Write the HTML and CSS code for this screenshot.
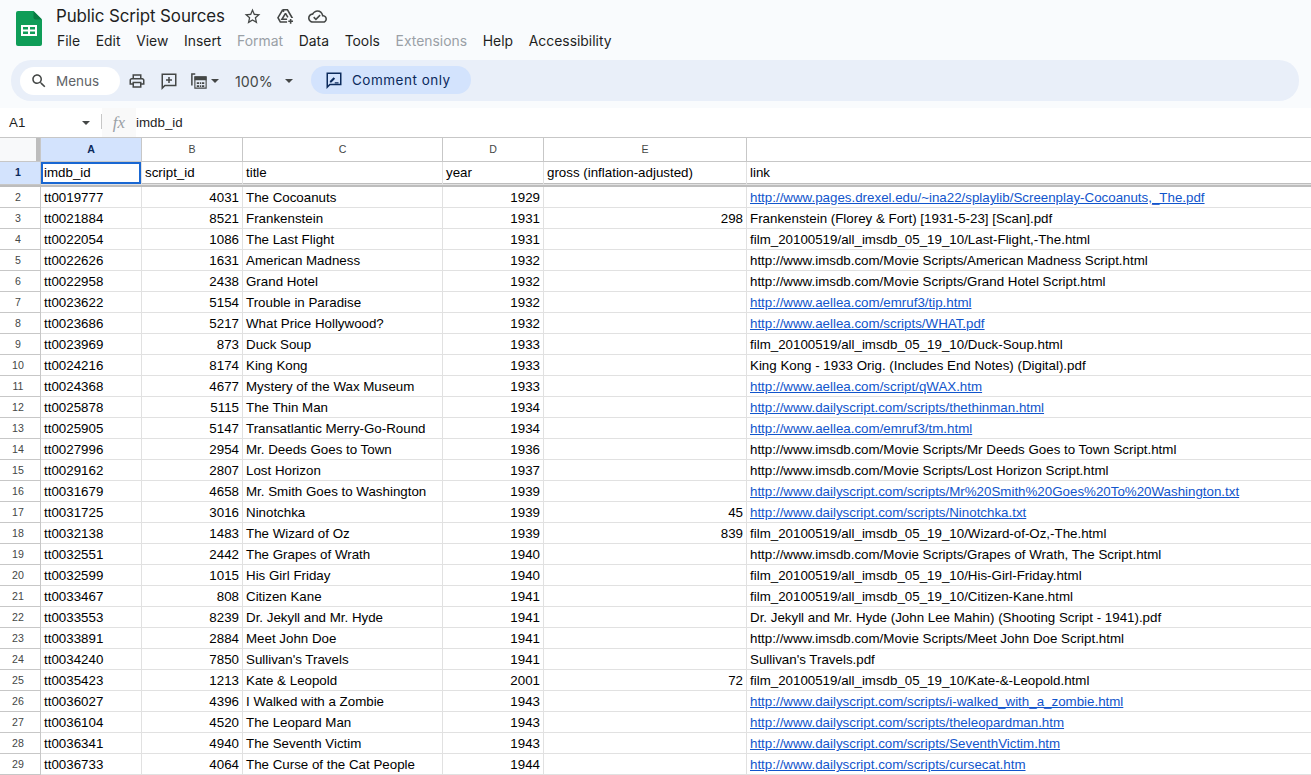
FILE: index.html
```html
<!DOCTYPE html>
<html lang="en">
<head>
<meta charset="utf-8">
<title>Public Script Sources</title>
<link rel="stylesheet" href="styles.css">
</head>
<body>
<header class="top">
  <svg class="logo" viewBox="0 0 26 35" aria-hidden="true">
    <path fill="#0f9d58" d="M2 0h15.500L26 8.500V33a2 2 0 0 1-2 2H2a2 2 0 0 1-2-2V2a2 2 0 0 1 2-2z"/>
    <path fill="#0a7a42" d="M17.500 0L26 8.500h-6.500a2 2 0 0 1-2-2z"/>
    <path fill="#fff" d="M5 14h16v11H5z"/>
    <path fill="#0f9d58" d="M7 16h5v2.500H7zM14 16h5v2.500h-5zM7 20.500h5V23H7zM14 20.500h5V23h-5z"/>
  </svg>
  <div class="titles">
    <div class="title-row">
      <span class="doc-title">Public Script Sources</span>
      <svg class="ic star" viewBox="0 0 24 24"><path d="M22 9.240l-7.190-.62L12 2 9.190 8.630 2 9.240l5.460 4.730L5.820 21 12 17.270 18.180 21l-1.630-7.030L22 9.240zM12 15.400l-3.760 2.270 1-4.280-3.320-2.880 4.380-.38L12 6.100l1.710 4.040 4.380.38-3.320 2.880 1 4.280L12 15.400z"/></svg>
      <svg class="ic drive" viewBox="0 0 24 24"><path class="line" d="M8.500 3.500h6L20 13h-1M8.500 3.500L2.500 13.500l3 5.500h8.500M8.500 3.500l1.500 2.500M12 8l-4.500 7.500h6.500M12 8l3 5"/><path class="line" d="M18.500 15v6M15.500 18h6"/></svg>
      <svg class="ic cloud" viewBox="0 0 24 24"><path d="M19.350 10.040C18.670 6.590 15.640 4 12 4 9.110 4 6.600 5.640 5.350 8.040 2.340 8.360 0 10.910 0 14c0 3.310 2.690 6 6 6h13c2.760 0 5-2.240 5-5 0-2.640-2.050-4.780-4.650-4.960zM19 18H6c-2.210 0-4-1.790-4-4 0-2.050 1.530-3.760 3.560-3.970l1.070-.11.5-.95C8.080 7.140 9.940 6 12 6c2.620 0 4.880 1.860 5.390 4.430l.3 1.500 1.530.11c1.560.1 2.780 1.410 2.780 2.960 0 1.650-1.350 3-3 3zm-9-3.820l-2.090-2.090L6.500 13.500 10 17l6.010-6.010-1.410-1.410z"/></svg>
    </div>
    <nav class="menu">
      <span>File</span><span>Edit</span><span>View</span><span>Insert</span><span class="off">Format</span><span>Data</span><span>Tools</span><span class="off">Extensions</span><span>Help</span><span>Accessibility</span>
    </nav>
  </div>
</header>

<div class="toolbar">
  <div class="search">
    <svg class="ic-search" viewBox="0 0 24 24"><path d="M15.500 14h-.79l-.28-.27C15.410 12.590 16 11.110 16 9.500 16 5.910 13.090 3 9.500 3S3 5.910 3 9.500 5.910 16 9.500 16c1.610 0 3.090-.59 4.230-1.570l.27.28v.79l5 4.990L20.490 19l-4.990-5zm-6 0C7.010 14 5 11.990 5 9.500S7.010 5 9.500 5 14 7.010 14 9.500 11.990 14 9.500 14z"/></svg>
    <span>Menus</span>
  </div>
  <svg class="tool print" viewBox="0 0 24 24"><path d="M19 8h-1V3H6v5H5c-1.660 0-3 1.340-3 3v6h4v4h12v-4h4v-6c0-1.660-1.340-3-3-3zM8 5h8v3H8V5zm8 14H8v-4h8v4zm4-4h-2v-2H6v2H4v-4c0-.55.45-1 1-1h14c.55 0 1 .45 1 1v4z"/></svg>
  <svg class="tool add" viewBox="0 0 24 24"><path class="line" d="M3 3h18v15H6.500L3 21.500z"/><path class="line" d="M12 6.500v8M8 10.500h8"/></svg>
  <svg class="tool calc" viewBox="0 0 24 24"><path class="line" d="M7 2.500H2.500V18"/><path class="line thin" d="M6.500 6.500h15v15h-15z"/><path d="M6 6h16v5H6zM9 13.500h3V16H9zM13 13.500h2V16h-2zM16 13.500h3V16h-3zM9 17.500h3V20H9zM13 17.500h2V20h-2zM16 17.500h3V20h-3z"/></svg>
  <span class="caret caret-calc"></span>
  <span class="zoom">100%</span>
  <span class="caret caret-zoom"></span>
  <div class="mode">
    <svg class="ic-mode" viewBox="0 0 24 24"><path class="line" d="M3 3h18v15H6.500L3 21.500z"/><path d="M6.500 13.200l5-5 2 2-5 5h-2zM13 15h5v1.500h-5z"/></svg>
    <span>Comment only</span>
  </div>
</div>

<div class="formula">
  <div class="namebox"><span>A1</span><span class="caret"></span></div>
  <div class="fxbox"><span>fx</span></div>
  <div class="fxtext">imdb_id</div>
</div>

<main class="sheet">
  <div class="row colhead">
    <div class="corner"></div><div class="sel">A</div><div>B</div><div>C</div><div>D</div><div>E</div><div></div>
  </div>
  <div class="row head">
    <div class="rn rn-sel">1</div><div class="active">imdb_id</div><div>script_id</div><div>title</div><div>year</div><div>gross (inflation-adjusted)</div><div>link</div>
  </div>
  <div class="freeze"></div>

  <div class="row"><div class="rn">2</div><div>tt0019777</div><div class="n">4031</div><div>The Cocoanuts</div><div class="n">1929</div><div class="n"></div><div><a>http://www.pages.drexel.edu/~ina22/splaylib/Screenplay-Cocoanuts,_The.pdf</a></div></div>
  <div class="row"><div class="rn">3</div><div>tt0021884</div><div class="n">8521</div><div>Frankenstein</div><div class="n">1931</div><div class="n">298</div><div>Frankenstein (Florey &amp; Fort) [1931-5-23] [Scan].pdf</div></div>
  <div class="row"><div class="rn">4</div><div>tt0022054</div><div class="n">1086</div><div>The Last Flight</div><div class="n">1931</div><div class="n"></div><div>film_20100519/all_imsdb_05_19_10/Last-Flight,-The.html</div></div>
  <div class="row"><div class="rn">5</div><div>tt0022626</div><div class="n">1631</div><div>American Madness</div><div class="n">1932</div><div class="n"></div><div>http://www.imsdb.com/Movie Scripts/American Madness Script.html</div></div>
  <div class="row"><div class="rn">6</div><div>tt0022958</div><div class="n">2438</div><div>Grand Hotel</div><div class="n">1932</div><div class="n"></div><div>http://www.imsdb.com/Movie Scripts/Grand Hotel Script.html</div></div>
  <div class="row"><div class="rn">7</div><div>tt0023622</div><div class="n">5154</div><div>Trouble in Paradise</div><div class="n">1932</div><div class="n"></div><div><a>http://www.aellea.com/emruf3/tip.html</a></div></div>
  <div class="row"><div class="rn">8</div><div>tt0023686</div><div class="n">5217</div><div>What Price Hollywood?</div><div class="n">1932</div><div class="n"></div><div><a>http://www.aellea.com/scripts/WHAT.pdf</a></div></div>
  <div class="row"><div class="rn">9</div><div>tt0023969</div><div class="n">873</div><div>Duck Soup</div><div class="n">1933</div><div class="n"></div><div>film_20100519/all_imsdb_05_19_10/Duck-Soup.html</div></div>
  <div class="row"><div class="rn">10</div><div>tt0024216</div><div class="n">8174</div><div>King Kong</div><div class="n">1933</div><div class="n"></div><div>King Kong - 1933 Orig. (Includes End Notes) (Digital).pdf</div></div>
  <div class="row"><div class="rn">11</div><div>tt0024368</div><div class="n">4677</div><div>Mystery of the Wax Museum</div><div class="n">1933</div><div class="n"></div><div><a>http://www.aellea.com/script/qWAX.htm</a></div></div>
  <div class="row"><div class="rn">12</div><div>tt0025878</div><div class="n">5115</div><div>The Thin Man</div><div class="n">1934</div><div class="n"></div><div><a>http://www.dailyscript.com/scripts/thethinman.html</a></div></div>
  <div class="row"><div class="rn">13</div><div>tt0025905</div><div class="n">5147</div><div>Transatlantic Merry-Go-Round</div><div class="n">1934</div><div class="n"></div><div><a>http://www.aellea.com/emruf3/tm.html</a></div></div>
  <div class="row"><div class="rn">14</div><div>tt0027996</div><div class="n">2954</div><div>Mr. Deeds Goes to Town</div><div class="n">1936</div><div class="n"></div><div>http://www.imsdb.com/Movie Scripts/Mr Deeds Goes to Town Script.html</div></div>
  <div class="row"><div class="rn">15</div><div>tt0029162</div><div class="n">2807</div><div>Lost Horizon</div><div class="n">1937</div><div class="n"></div><div>http://www.imsdb.com/Movie Scripts/Lost Horizon Script.html</div></div>
  <div class="row"><div class="rn">16</div><div>tt0031679</div><div class="n">4658</div><div>Mr. Smith Goes to Washington</div><div class="n">1939</div><div class="n"></div><div><a>http://www.dailyscript.com/scripts/Mr%20Smith%20Goes%20To%20Washington.txt</a></div></div>
  <div class="row"><div class="rn">17</div><div>tt0031725</div><div class="n">3016</div><div>Ninotchka</div><div class="n">1939</div><div class="n">45</div><div><a>http://www.dailyscript.com/scripts/Ninotchka.txt</a></div></div>
  <div class="row"><div class="rn">18</div><div>tt0032138</div><div class="n">1483</div><div>The Wizard of Oz</div><div class="n">1939</div><div class="n">839</div><div>film_20100519/all_imsdb_05_19_10/Wizard-of-Oz,-The.html</div></div>
  <div class="row"><div class="rn">19</div><div>tt0032551</div><div class="n">2442</div><div>The Grapes of Wrath</div><div class="n">1940</div><div class="n"></div><div>http://www.imsdb.com/Movie Scripts/Grapes of Wrath, The Script.html</div></div>
  <div class="row"><div class="rn">20</div><div>tt0032599</div><div class="n">1015</div><div>His Girl Friday</div><div class="n">1940</div><div class="n"></div><div>film_20100519/all_imsdb_05_19_10/His-Girl-Friday.html</div></div>
  <div class="row"><div class="rn">21</div><div>tt0033467</div><div class="n">808</div><div>Citizen Kane</div><div class="n">1941</div><div class="n"></div><div>film_20100519/all_imsdb_05_19_10/Citizen-Kane.html</div></div>
  <div class="row"><div class="rn">22</div><div>tt0033553</div><div class="n">8239</div><div>Dr. Jekyll and Mr. Hyde</div><div class="n">1941</div><div class="n"></div><div>Dr. Jekyll and Mr. Hyde (John Lee Mahin) (Shooting Script - 1941).pdf</div></div>
  <div class="row"><div class="rn">23</div><div>tt0033891</div><div class="n">2884</div><div>Meet John Doe</div><div class="n">1941</div><div class="n"></div><div>http://www.imsdb.com/Movie Scripts/Meet John Doe Script.html</div></div>
  <div class="row"><div class="rn">24</div><div>tt0034240</div><div class="n">7850</div><div>Sullivan's Travels</div><div class="n">1941</div><div class="n"></div><div>Sullivan's Travels.pdf</div></div>
  <div class="row"><div class="rn">25</div><div>tt0035423</div><div class="n">1213</div><div>Kate &amp; Leopold</div><div class="n">2001</div><div class="n">72</div><div>film_20100519/all_imsdb_05_19_10/Kate-&amp;-Leopold.html</div></div>
  <div class="row"><div class="rn">26</div><div>tt0036027</div><div class="n">4396</div><div>I Walked with a Zombie</div><div class="n">1943</div><div class="n"></div><div><a>http://www.dailyscript.com/scripts/i-walked_with_a_zombie.html</a></div></div>
  <div class="row"><div class="rn">27</div><div>tt0036104</div><div class="n">4520</div><div>The Leopard Man</div><div class="n">1943</div><div class="n"></div><div><a>http://www.dailyscript.com/scripts/theleopardman.htm</a></div></div>
  <div class="row"><div class="rn">28</div><div>tt0036341</div><div class="n">4940</div><div>The Seventh Victim</div><div class="n">1943</div><div class="n"></div><div><a>http://www.dailyscript.com/scripts/SeventhVictim.htm</a></div></div>
  <div class="row"><div class="rn">29</div><div>tt0036733</div><div class="n">4064</div><div>The Curse of the Cat People</div><div class="n">1944</div><div class="n"></div><div><a>http://www.dailyscript.com/scripts/cursecat.htm</a></div></div>
</main>
</body>
</html>
```

FILE: styles.css
```css
* { box-sizing: border-box; }
html, body { margin: 0; height: 100%; overflow: hidden; }
body { background: #f9fbfd; font-family: "Liberation Sans", Arial, sans-serif; color: #1f1f1f; }

.top { display: flex; height: 60px; padding: 11px 0 0 16px; }
.logo { width: 26px; height: 35px; flex: none; }
.titles { margin-left: 14px; margin-top: -8px; }
.title-row { display: flex; align-items: center; height: 26px; }
.doc-title { font-family: "Inter", sans-serif; font-size: 16.9px; letter-spacing: -0.1px; color: #1f1f1f; }
.ic { width: 19px; height: 19px; fill: #444746; flex: none; }
.star { margin-left: 18px; }
.drive { margin-left: 14px; }
.cloud { margin-left: 13px; }
.line { fill: none; stroke: #444746; stroke-width: 2; }
.thin { stroke-width: 1.5; }
.menu { display: flex; gap: 15.7px; font-family: "Inter", sans-serif; font-size: 13.9px; line-height: 20px; margin-top: 2px; margin-left: 1px; color: #1f1f1f; }
.off { color: #9aa0a6; }

.toolbar { display: flex; align-items: center; height: 41px; margin: 0 12px 0 11px; background: #e9eff9; border-radius: 20px; padding-left: 9px; color: #444746; }
.search { display: flex; align-items: center; width: 100px; height: 28px; background: #fff; border-radius: 14px; padding-left: 10px; font-family: "Inter", sans-serif; font-size: 13.5px; color: #5f6368; }
.ic-search { width: 18px; height: 18px; fill: #444746; margin-right: 8px; }
.tool { width: 18px; height: 18px; fill: #444746; flex: none; }
.print { margin-left: 8px; }
.add { margin-left: 14px; }
.calc { margin-left: 12px; }
.caret { display: inline-block; width: 0; height: 0; border-left: 4px solid transparent; border-right: 4px solid transparent; border-top: 4px solid #444746; flex: none; }
.caret-calc { margin-left: 3px; }
.zoom { font-family: "Inter", sans-serif; font-size: 14.2px; margin-left: 16px; margin-top: 2px; width: 50px; }
.caret-zoom { margin-left: 0; }
.mode { display: flex; align-items: center; height: 28px; width: 160px; margin-left: 18px; margin-top: -1px; background: #d3e3fd; border-radius: 14px; padding-left: 14px; color: #0b2a5c; font-family: "Inter", sans-serif; font-size: 13.5px; font-weight: 400; letter-spacing: 0.5px; }
.ic-mode { width: 18px; height: 18px; fill: #0b2a5c; margin-right: 9px; }
.ic-mode .line { stroke: #0b2a5c; }

.formula { display: flex; align-items: stretch; height: 30px; margin-top: 7px; background: #fff; border-bottom: 1px solid #c7c7c7; font-size: 13.33px; }
.namebox { display: flex; align-items: center; justify-content: space-between; width: 102px; padding: 0 12px 0 9px; position: relative; }
.namebox::after { content: ""; position: absolute; right: 0; top: 6px; bottom: 8px; width: 1px; background: #c7c7c7; }
.fxbox { width: 34px; display: flex; align-items: center; justify-content: center; background: #f9f9f9; font-family: "Liberation Serif", serif; font-style: italic; font-size: 17px; color: #9aa0a6; }
.fxtext { display: flex; align-items: center; }

.sheet { background: #fff; font-size: 13.33px; color: #000; }
.row { display: grid; grid-template-columns: 41px 101px 101px 200px 101px 203px 1fr; height: 21px; }
.row > div { border-right: 1px solid #e1e1e1; border-bottom: 1px solid #e1e1e1; padding: 0 3px; line-height: 21px; white-space: nowrap; overflow: hidden; }
.row > div:last-child { border-right: 0; }
.row > .n { text-align: right; }
.row > .rn { padding: 0 4px 0 0; text-align: center; font-size: 10.6px; line-height: 20px; color: #444746; border-color: #c7c7c7; background: #fff; }
a { color: #1155cc; text-decoration: underline; }

.colhead { height: 24px; }
.colhead > div { text-align: center; font-size: 10.6px; line-height: 23px; color: #444746; background: #fff; border-color: #c7c7c7; }
.colhead > .corner { background: linear-gradient(to right, #f8f9fa 36px, #bdbdbd 36px); }
.colhead > .sel { background: #d3e3fd; color: #0b2a5c; font-weight: 700; }
.head > div { line-height: 22px; }
.row.head > .rn-sel { background: #d3e3fd; color: #0b2a5c; font-weight: 700; line-height: 20px; }
.row.head > .active { box-shadow: inset 0 0 0 2px #1967d2; overflow: visible; }
.freeze { height: 4px; background: #bdbdbd; }
```
